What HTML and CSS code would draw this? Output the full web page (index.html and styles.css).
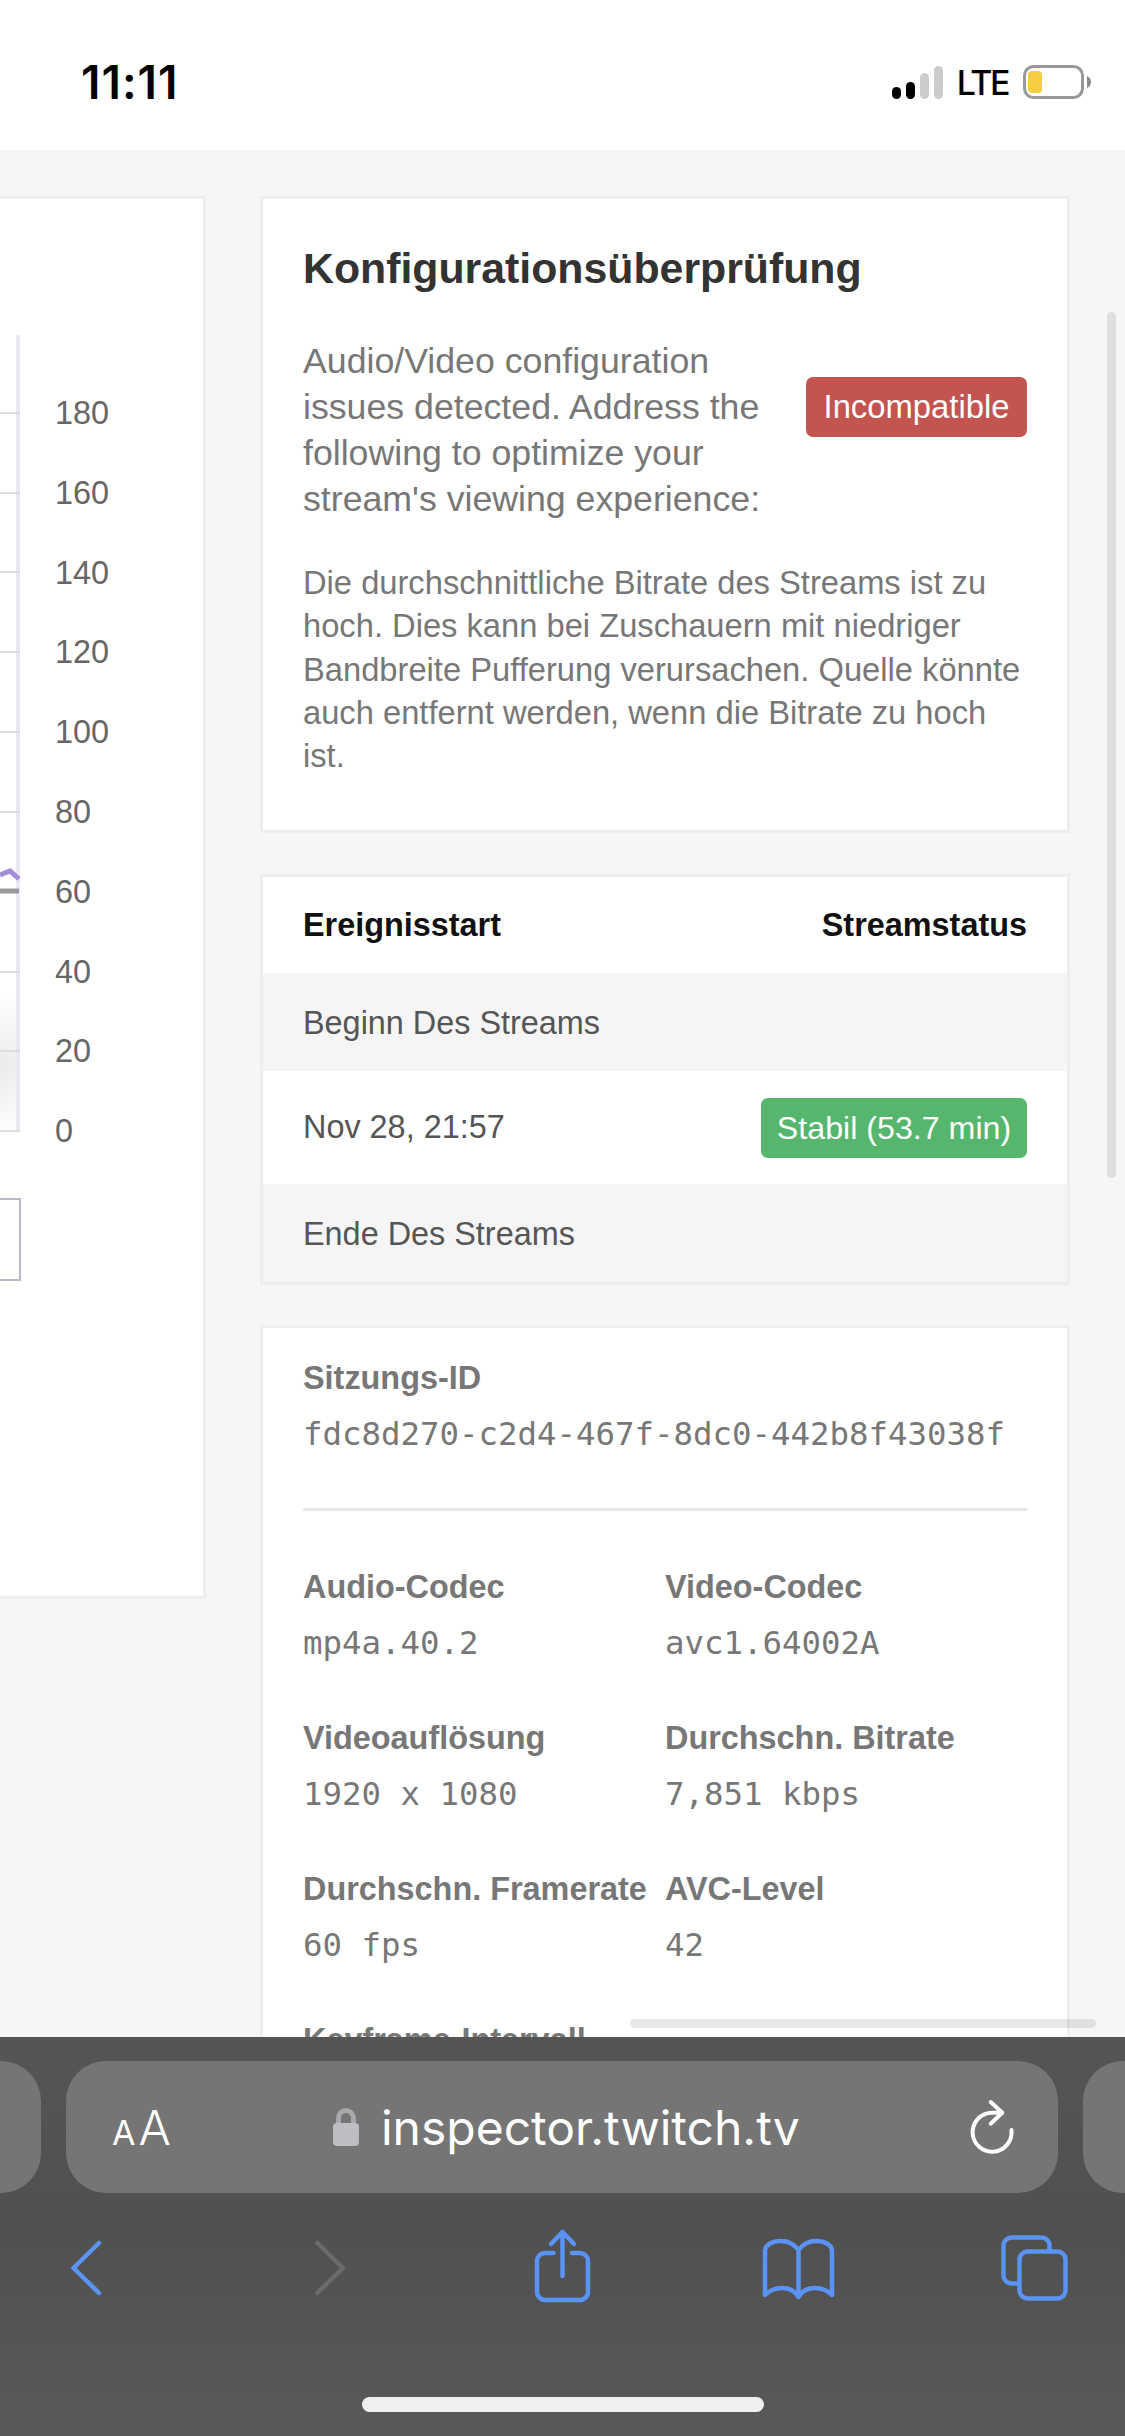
FILE: index.html
```html
<!DOCTYPE html>
<html lang="de">

<head>
    <meta charset="UTF-8">
    <title>inspector.twitch.tv</title>
    <link rel="stylesheet" href="styles.css">
</head>

<body>
    <div class="status-bar">
        <span class="clock">11:11</span>
        <div class="status-icons">
            <svg class="signal" width="51" height="33" viewBox="0 0 51 33">
                <rect x="0" y="21" width="9" height="12" rx="4.5" fill="#000" />
                <rect x="14" y="16" width="9" height="17" rx="4.5" fill="#000" />
                <rect x="28" y="7" width="9" height="26" rx="4.5" fill="#ccc" />
                <rect x="42" y="0" width="9" height="33" rx="4.5" fill="#ccc" />
            </svg>
            <span class="network">LTE</span>
            <svg class="battery" width="68" height="34" viewBox="0 0 68 34">
                <rect x="1.5" y="1.5" width="58" height="31" rx="9" fill="none" stroke="#999" stroke-width="3" />
                <rect x="5" y="6" width="14" height="22" rx="4" fill="#f5ce42" />
                <path d="M64 11 q4 2 4 6 q0 4 -4 6 z" fill="#8a8a8a" />
            </svg>
        </div>
    </div>

    <div class="main">
        <div class="card chart-card">
            <div class="plot">
                <svg class="plot-svg" width="21" height="797" viewBox="0 0 21 797">
                    <defs>
                        <radialGradient id="fade" gradientUnits="userSpaceOnUse" cx="0" cy="730" r="72">
                            <stop offset="0" stop-color="#ebebeb" />
                            <stop offset="1" stop-color="#fff" />
                        </radialGradient>
                    </defs>
                    <rect x="0" y="655" width="16" height="141" fill="url(#fade)" />
                    <rect x="16" y="0" width="4" height="796" fill="#e9e8f5" />
                    <path d="M0 78H20M0 158H20M0 237H20M0 317H20M0 397H20M0 477H20M0 637H20M0 716H20M0 796H20" stroke="#ddd" stroke-width="2" />
                    <path d="M0 540 L10 536 L19 544" fill="none" stroke="#a48fd6" stroke-width="5" />
                    <path d="M0 556H19" stroke="#999" stroke-width="5" />
                </svg>
                <div class="range-box"></div>
            </div>
            <div class="axis">
                <span>180</span>
                <span>160</span>
                <span>140</span>
                <span>120</span>
                <span>100</span>
                <span>80</span>
                <span>60</span>
                <span>40</span>
                <span>20</span>
                <span>0</span>
            </div>
        </div>

        <div class="side">
            <div class="card config-card">
                <h2 class="config-title">Konfigurationsüberprüfung</h2>
                <div class="config-row">
                    <p class="config-text">Audio/Video configuration issues detected. Address the following to optimize your stream's viewing experience:</p>
                    <span class="badge badge-red">Incompatible</span>
                </div>
                <p class="config-note">Die durchschnittliche Bitrate des Streams ist zu hoch. Dies kann bei Zuschauern mit niedriger Bandbreite Pufferung verursachen. Quelle könnte auch entfernt werden, wenn die Bitrate zu hoch ist.</p>
            </div>

            <div class="card events-card">
                <div class="event-head">
                    <span>Ereignisstart</span>
                    <span>Streamstatus</span>
                </div>
                <div class="event-row stripe">Beginn Des Streams</div>
                <div class="event-row event-mid">
                    <span>Nov 28, 21:57</span>
                    <span class="badge badge-green">Stabil (53.7 min)</span>
                </div>
                <div class="event-row stripe">Ende Des Streams</div>
            </div>

            <div class="card info-card">
                <div class="info-label">Sitzungs-ID</div>
                <div class="info-value">fdc8d270-c2d4-467f-8dc0-442b8f43038f</div>
                <div class="info-line"></div>
                <div class="info-grid">
                    <div>
                        <div class="info-label">Audio-Codec</div>
                        <div class="info-value">mp4a.40.2</div>
                    </div>
                    <div>
                        <div class="info-label">Video-Codec</div>
                        <div class="info-value">avc1.64002A</div>
                    </div>
                    <div>
                        <div class="info-label">Videoauflösung</div>
                        <div class="info-value">1920 x 1080</div>
                    </div>
                    <div>
                        <div class="info-label">Durchschn. Bitrate</div>
                        <div class="info-value">7,851 kbps</div>
                    </div>
                    <div>
                        <div class="info-label">Durchschn. Framerate</div>
                        <div class="info-value">60 fps</div>
                    </div>
                    <div>
                        <div class="info-label">AVC-Level</div>
                        <div class="info-value">42</div>
                    </div>
                    <div>
                        <div class="info-label">Keyframe-Intervall</div>
                    </div>
                </div>
            </div>
        </div>

        <div class="scroll-y"></div>
        <div class="scroll-x"></div>
    </div>

    <div class="toolbar">
        <div class="tabs-row">
            <div class="pill pill-left"></div>
            <div class="pill url-bar">
                <span class="text-size"><span class="text-size-small">A</span>A</span>
                <span class="address">
                    <svg width="26" height="38" viewBox="0 0 26 38">
                        <path d="M5.5 17V10a7.5 7.5 0 0 1 15 0V17" fill="none" stroke="#a8a8ad" stroke-width="5" />
                        <rect x="0" y="15" width="26" height="23" rx="4" fill="#bdbdc2" />
                    </svg>
                    <span class="address-text">inspector.twitch.tv</span>
                </span>
                <svg width="60" height="60" viewBox="0 0 60 60">
                    <path d="M40 15.7H30A19.5 19.5 0 1 0 49.5 33" fill="none" stroke="#fff" stroke-width="4" stroke-linecap="round" />
                    <path d="M28.7 5L40.3 15.7L28.7 26.7" fill="none" stroke="#fff" stroke-width="4" stroke-linecap="round" stroke-linejoin="round" />
                </svg>
            </div>
            <div class="pill pill-right"></div>
        </div>
        <div class="nav-row">
            <svg class="nav-icon" viewBox="0 0 80 80">
                <path d="M52 18L26.5 43L52 68" />
            </svg>
            <svg class="nav-icon nav-off" viewBox="0 0 80 80">
                <path d="M33.5 18L59 43L33.5 68" />
            </svg>
            <svg class="nav-icon" viewBox="0 0 80 80">
                <path d="M32.5 28H24a8 8 0 0 0-8 8V67a8 8 0 0 0 8 8H59a8 8 0 0 0 8-8V36a8 8 0 0 0-8-8H51" />
                <path d="M41.5 7V51M30 19L41.5 7L53 19" />
            </svg>
            <svg class="nav-icon" viewBox="0 0 80 80">
                <path d="M41.5 25C37 19 31 16 24 16C15 16 8 20 8 26V70C13 65 19 63 25 63C32 63 38 66 41.5 72C45 66 51 63 58 63C64 63 70 65 75 70V26C75 20 68 16 59 16C52 16 46 19 41.5 25V72" />
            </svg>
            <svg class="nav-icon" viewBox="0 0 80 80">
                <path d="M55.5 24V20.5a8 8 0 0 0-8-8H17.5a8 8 0 0 0-8 8V50.5a8 8 0 0 0 8 8H23" />
                <rect x="25.5" y="26.5" width="46" height="47" rx="8" />
            </svg>
        </div>
        <div class="home-bar"></div>
    </div>
</body>

</html>
```

FILE: styles.css
```css
* {
    margin: 0;
    padding: 0;
    box-sizing: border-box;
}

body {
    width: 1125px;
    height: 2436px;
    overflow: hidden;
    display: flex;
    flex-direction: column;
    background: #f6f6f6;
    font-family: "Liberation Sans", Arial, sans-serif;
}

/* status bar */
.status-bar {
    height: 150px;
    padding: 14px 34px 0 81px;
    background: #fff;
    display: flex;
    justify-content: space-between;
    align-items: center;
    flex-shrink: 0;
}

.clock {
    font-family: Inter, sans-serif;
    font-size: 46px;
    font-weight: 600;
    letter-spacing: 1px;
    color: #000;
}

.status-icons {
    display: flex;
    align-items: center;
}

.network {
    margin: 0 15px 0 14px;
    font-family: Inter, sans-serif;
    font-size: 34px;
    font-weight: 500;
    letter-spacing: -2.5px;
    color: #000;
}

/* page */
.main {
    flex: 1;
    position: relative;
    overflow: hidden;
    display: flex;
    gap: 54px;
    padding-top: 46px;
}

.card {
    background: #fff;
    border: 3px solid #eee;
}

.chart-card {
    width: 206px;
    height: 1403px;
    border-left: 0;
    display: flex;
    flex-shrink: 0;
    padding-top: 136px;
}

.plot {
    width: 21px;
    flex-shrink: 0;
}

.plot-svg {
    display: block;
}

.range-box {
    width: 21px;
    height: 83px;
    margin-top: 66px;
    border: 2px solid #b9b9c9;
    border-left: 0;
}

.axis {
    display: flex;
    flex-direction: column;
    margin: 39px 0 0 34px;
    font-size: 32.4px;
    color: #666;
}

.axis span {
    height: 79.8px;
    line-height: 79.8px;
}

.side {
    width: 810px;
    flex-shrink: 0;
    display: flex;
    flex-direction: column;
    gap: 41px;
}

.badge {
    color: #fff;
    border-radius: 7px;
    height: 60px;
    line-height: 60px;
    text-align: center;
    flex-shrink: 0;
}

.badge-red {
    width: 221px;
    margin-top: 39px;
    font-size: 32.8px;
    background: #c4544f;
}

.badge-green {
    width: 266px;
    font-size: 32.2px;
    background: #56b66e;
}

/* configuration check */
.config-card {
    padding: 44px 40px 53px;
}

.config-title {
    font-size: 42.8px;
    line-height: 50px;
    font-weight: bold;
    color: #333;
}

.config-row {
    margin-top: 45px;
    display: flex;
    justify-content: space-between;
    align-items: flex-start;
}

.config-text {
    width: 470px;
    font-size: 35.7px;
    line-height: 46px;
    color: #777;
}

.config-note {
    margin-top: 39px;
    font-size: 32.7px;
    line-height: 43.3px;
    color: #777;
}

/* events */
.event-head {
    height: 96px;
    padding: 0 40px;
    display: flex;
    justify-content: space-between;
    align-items: center;
    font-size: 32.4px;
    font-weight: bold;
    color: #111;
}

.event-row {
    height: 98px;
    padding: 0 40px;
    display: flex;
    justify-content: space-between;
    align-items: center;
    font-size: 32.4px;
    color: #555;
}

.event-mid {
    height: 113px;
}

.stripe {
    padding-top: 2px;
    background: #f5f5f5;
}

/* stream info */
.info-card {
    margin-top: -1px;
    padding: 28px 40px 0;
    flex-shrink: 0;
}

.info-label {
    font-size: 32.4px;
    line-height: 44px;
    font-weight: bold;
    color: #777;
}

.info-value {
    margin-top: 12px;
    font-family: "DejaVu Sans Mono", "Liberation Mono", monospace;
    font-size: 32.4px;
    line-height: 44px;
    color: #777;
}

.info-line {
    height: 3px;
    margin: 52px 0 54px;
    background: #e6e6e6;
}

.info-grid {
    display: grid;
    grid-template-columns: 362px 1fr;
    row-gap: 51px;
    white-space: nowrap;
}

/* overlay scrollbars */
.scroll-y {
    position: absolute;
    left: 1107px;
    top: 162px;
    width: 9px;
    height: 866px;
    border-radius: 5px;
    background: rgba(0, 0, 0, .09);
}

.scroll-x {
    position: absolute;
    left: 630px;
    top: 1869px;
    width: 466px;
    height: 9px;
    border-radius: 5px;
    background: rgba(0, 0, 0, .09);
}

/* safari toolbar */
.toolbar {
    height: 399px;
    flex-shrink: 0;
    padding-top: 24px;
    background: linear-gradient(#555, #505050 190px, #595959);
    display: flex;
    flex-direction: column;
}

.tabs-row {
    display: flex;
    gap: 25px;
}

.pill {
    height: 132px;
    background: #757575;
    border-radius: 40px;
}

.pill-left {
    width: 41px;
    border-radius: 0 40px 40px 0;
}

.pill-right {
    width: 42px;
    border-radius: 40px 0 0 40px;
}

.url-bar {
    width: 992px;
    padding: 0 36px 0 46px;
    display: flex;
    justify-content: space-between;
    align-items: center;
    color: #fff;
}

.text-size {
    font-family: Inter, sans-serif;
    font-size: 48px;
    font-weight: 300;
}

.text-size-small {
    font-size: 34px;
    font-weight: 400;
    margin-right: 3px;
}

.address {
    display: flex;
    align-items: center;
    gap: 22px;
}

.address-text {
    font-family: Inter, sans-serif;
    font-size: 48px;
}

.nav-row {
    margin-top: 32px;
    padding: 0 51px 0 47px;
    display: flex;
    justify-content: space-between;
}

.nav-icon {
    width: 80px;
    height: 80px;
    fill: none;
    stroke: #5b93f5;
    stroke-width: 4.5;
    stroke-linecap: round;
    stroke-linejoin: round;
}

.nav-off {
    stroke: #6b6b6b;
}

.home-bar {
    width: 402px;
    height: 15px;
    margin: 92px auto 0;
    border-radius: 8px;
    background: #f0f0f0;
}
```
